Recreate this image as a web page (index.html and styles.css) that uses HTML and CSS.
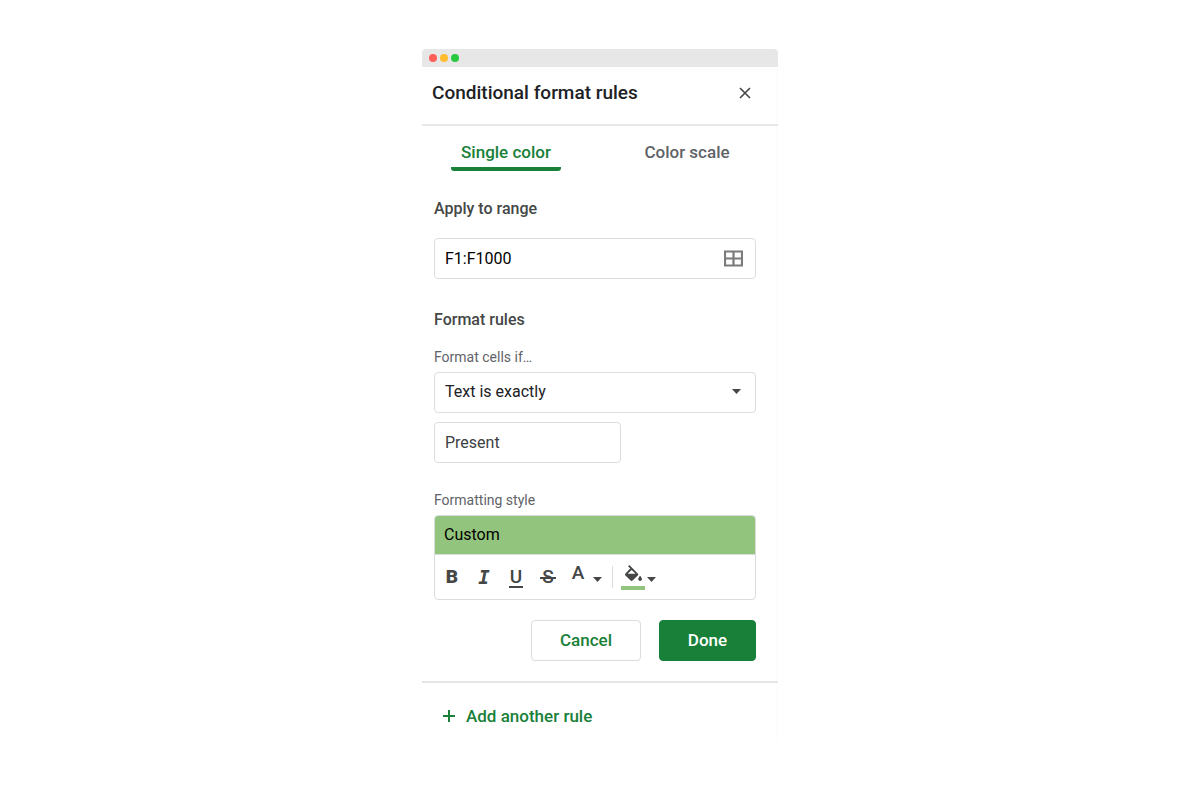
FILE: index.html
```html
<!DOCTYPE html>
<html lang="en">
<head>
<meta charset="utf-8">
<meta name="viewport" content="width=device-width, initial-scale=1">
<title>Conditional format rules</title>
<link rel="stylesheet" href="styles.css">
</head>
<body>
<main class="window">
  <div class="titlebar"><span class="dot red"></span><span class="dot amber"></span><span class="dot green"></span></div>
  <header class="header">
    <h1>Conditional format rules</h1>
    <button class="icon-button" type="button" aria-label="Close">
      <svg width="12" height="12" viewBox="0 0 12 12"><path d="M1 1l10 10M11 1L1 11" fill="none" stroke="#444746" stroke-width="1.6"/></svg>
    </button>
  </header>
  <nav class="tabs" role="tablist">
    <button class="tab active" type="button" role="tab" aria-selected="true">Single color</button>
    <button class="tab" type="button" role="tab" aria-selected="false">Color scale</button>
  </nav>
  <form class="form">
    <label class="section-label" for="range">Apply to range</label>
    <div class="field range-field">
      <input id="range" class="text-input" type="text" value="F1:F1000">
      <button class="icon-button" type="button" aria-label="Select data range">
        <svg width="19" height="17" viewBox="0 0 19 17"><path d="M1 1.500h17v14H1zM9.500 1v15M1 8.500h17" fill="none" stroke="#7b7b7b" stroke-width="2.200"/></svg>
      </button>
    </div>
    <h2 class="section-label rules-label">Format rules</h2>
    <label class="small-label" for="condition">Format cells if…</label>
    <div class="field select-field">
      <select id="condition" class="select"><option>Text is exactly</option></select>
      <svg class="select-arrow" width="9" height="5" viewBox="0 0 9 5"><path d="M0 0h9L4.500 5z" fill="#444746"/></svg>
    </div>
    <div class="field value-field">
      <input class="text-input value" type="text" value="Present" aria-label="Value">
    </div>
    <h3 class="small-label style-label">Formatting style</h3>
    <div class="style-box">
      <div class="preview">Custom</div>
      <div class="toolbar">
        <button class="tool bold" type="button" aria-label="Bold">B</button>
        <button class="tool italic" type="button" aria-label="Italic">I</button>
        <button class="tool" type="button" aria-label="Underline"><span class="underline">U</span></button>
        <button class="tool strike" type="button" aria-label="Strikethrough">S</button>
        <button class="tool color" type="button" aria-label="Text color"><span class="letter">A</span>
          <svg class="caret" width="9" height="5" viewBox="0 0 9 5"><path d="M0 0h9L4.500 5z" fill="#444746"/></svg>
        </button>
        <span class="divider"></span>
        <button class="tool fill" type="button" aria-label="Fill color">
          <span class="bucket"><svg width="17" height="16" viewBox="3 0 18 17"><path fill="#444746" d="M16.560 8.940L7.620 0 6.210 1.410l2.380 2.380-5.150 5.150c-.59.59-.59 1.540 0 2.120l5.500 5.500c.29.29.68.44 1.060.44s.77-.15 1.060-.44l5.500-5.500c.59-.58.59-1.530 0-2.120zM5.800 9.400L10 5.210 14.200 9.400H5.800zM19 11.500s-2 2.170-2 3.500c0 1.100.9 2 2 2s2-.9 2-2c0-1.330-2-3.500-2-3.500z"/></svg></span>
          <svg class="caret" width="9" height="5" viewBox="0 0 9 5"><path d="M0 0h9L4.500 5z" fill="#444746"/></svg>
        </button>
      </div>
    </div>
    <div class="actions">
      <button class="button cancel" type="button">Cancel</button>
      <button class="button done" type="button">Done</button>
    </div>
  </form>
  <footer class="footer">
    <button class="add" type="button">
      <svg width="12" height="12" viewBox="0 0 12 12"><path d="M6 0v12M0 6h12" fill="none" stroke="#188038" stroke-width="2"/></svg>
      Add another rule
    </button>
  </footer>
</main>
</body>
</html>
```
FILE: styles.css
```css
* { box-sizing: border-box; }

body {
  margin: 0;
  padding: 49px 0;
  background: #fff;
  color: #202124;
  font-family: Roboto, "Liberation Sans", sans-serif;
  font-size: 16px;
  line-height: 20px;
}

h1, h2, h3 { margin: 0; font-weight: 500; }

button, input, select { font: inherit; color: inherit; }

button {
  padding: 0;
  border: 0;
  background: none;
  cursor: pointer;
}

.window {
  width: 100%;
  max-width: 356px;
  margin: 0 auto;
  border-radius: 4px 4px 0 0;
  box-shadow: inset -1px 0 #fafafa;
  overflow: hidden;
}

.titlebar {
  display: flex;
  align-items: center;
  gap: 3px;
  height: 18px;
  padding: 0 7px;
  background: #e7e7e7;
}

.dot { width: 8px; height: 8px; border-radius: 50%; }
.red { background: #ff5f57; }
.amber { background: #febc2e; }
.green { background: #28c840; }

.header {
  display: flex;
  align-items: center;
  justify-content: space-between;
  padding: 14px 27px 19px 10px;
  border-bottom: 2px solid #e8e8e8;
}

.header h1 { font-size: 19px; line-height: 24px; }

.icon-button { display: flex; }

.tabs {
  display: flex;
  justify-content: space-between;
  padding: 0 36px 0 29px;
}

.tab {
  width: 110px;
  padding: 16px 0 5px;
  border-bottom: 4px solid transparent;
  color: #5f6368;
  font-size: 17px;
  font-weight: 500;
  line-height: 20px;
}

.tab.active {
  color: #188038;
  background: linear-gradient(#188038, #188038) bottom / 100% 4px no-repeat border-box;
  border-radius: 3px;
}

.form {
  display: flex;
  flex-direction: column;
  padding: 28px 22px 20px 12px;
}

.section-label {
  color: #444746;
  font-size: 16px;
  font-weight: 500;
  line-height: 20px;
}

.small-label {
  color: #5f6368;
  font-size: 14px;
  font-weight: 400;
  line-height: 20px;
}

.field {
  display: flex;
  align-items: center;
  height: 41px;
  border: 1px solid #dcdde0;
  border-radius: 4px;
}

.range-field { margin-top: 19px; padding-right: 12px; }
.rules-label { margin-top: 31px; }
.rules-label + .small-label { margin-top: 17px; }
.select-field { position: relative; margin-top: 5px; }
.value-field { width: 58%; margin-top: 9px; }
.style-label { margin-top: 27px; }

.text-input {
  flex: 1;
  min-width: 0;
  padding: 0 10px;
  border: 0;
  background: none;
  color: #000;
}

.text-input.value { color: #3c4043; }

.select {
  width: 100%;
  height: 100%;
  padding: 0 10px 2px;
  border: 0;
  background: none;
  appearance: none;
}

.select-arrow { position: absolute; right: 14px; top: 16px; pointer-events: none; }

.style-box {
  margin-top: 5px;
  border: 1px solid #dadce0;
  border-radius: 4px;
  overflow: hidden;
}

.preview {
  padding: 9px;
  border-bottom: 1px solid #dadce0;
  background: #93c47d;
  color: #000;
}

.toolbar {
  display: flex;
  align-items: center;
  height: 44px;
  padding: 0 1px;
  color: #444746;
}

.tool {
  display: flex;
  align-items: center;
  justify-content: center;
  width: 32px;
  height: 28px;
  font-size: 19px;
  line-height: 20px;
}

.bold { font-weight: 900; }
.italic { font-family: "DejaVu Sans Mono", monospace; font-style: italic; font-weight: 700; }
.underline { padding: 1px 1px 0; border-bottom: 2px solid #444746; font-weight: 500; line-height: 18px; }
.strike { position: relative; font-weight: 500; }

.strike::after {
  content: "";
  position: absolute;
  left: 8px;
  right: 8px;
  top: 14px;
  height: 2px;
  background: #444746;
}

.color { gap: 9px; width: 46px; font-weight: 500; }
.letter { padding-bottom: 8px; }
.caret { margin-top: 5px; }
.divider { width: 1px; height: 22px; margin: 0 8px 0 2px; background: #dadce0; }
.fill { gap: 2px; width: 35px; }

.bucket {
  display: flex;
  justify-content: center;
  width: 24px;
  padding-bottom: 5px;
  border-bottom: 4px solid #93c47d;
}

.actions {
  display: flex;
  justify-content: flex-end;
  gap: 18px;
  margin-top: 20px;
}

.button {
  height: 41px;
  padding-bottom: 2px;
  border: 1px solid #dadce0;
  border-radius: 4px;
  font-size: 17px;
  font-weight: 500;
}

.cancel { width: 110px; color: #188038; }
.done { width: 97px; border-color: #188038; background: #188038; color: #fff; }

.footer {
  padding: 23px 21px 16px;
  border-top: 2px solid #e4e5e6;
}

.add {
  display: flex;
  align-items: center;
  gap: 11px;
  color: #188038;
  font-size: 17px;
  font-weight: 500;
  line-height: 20px;
}
```
